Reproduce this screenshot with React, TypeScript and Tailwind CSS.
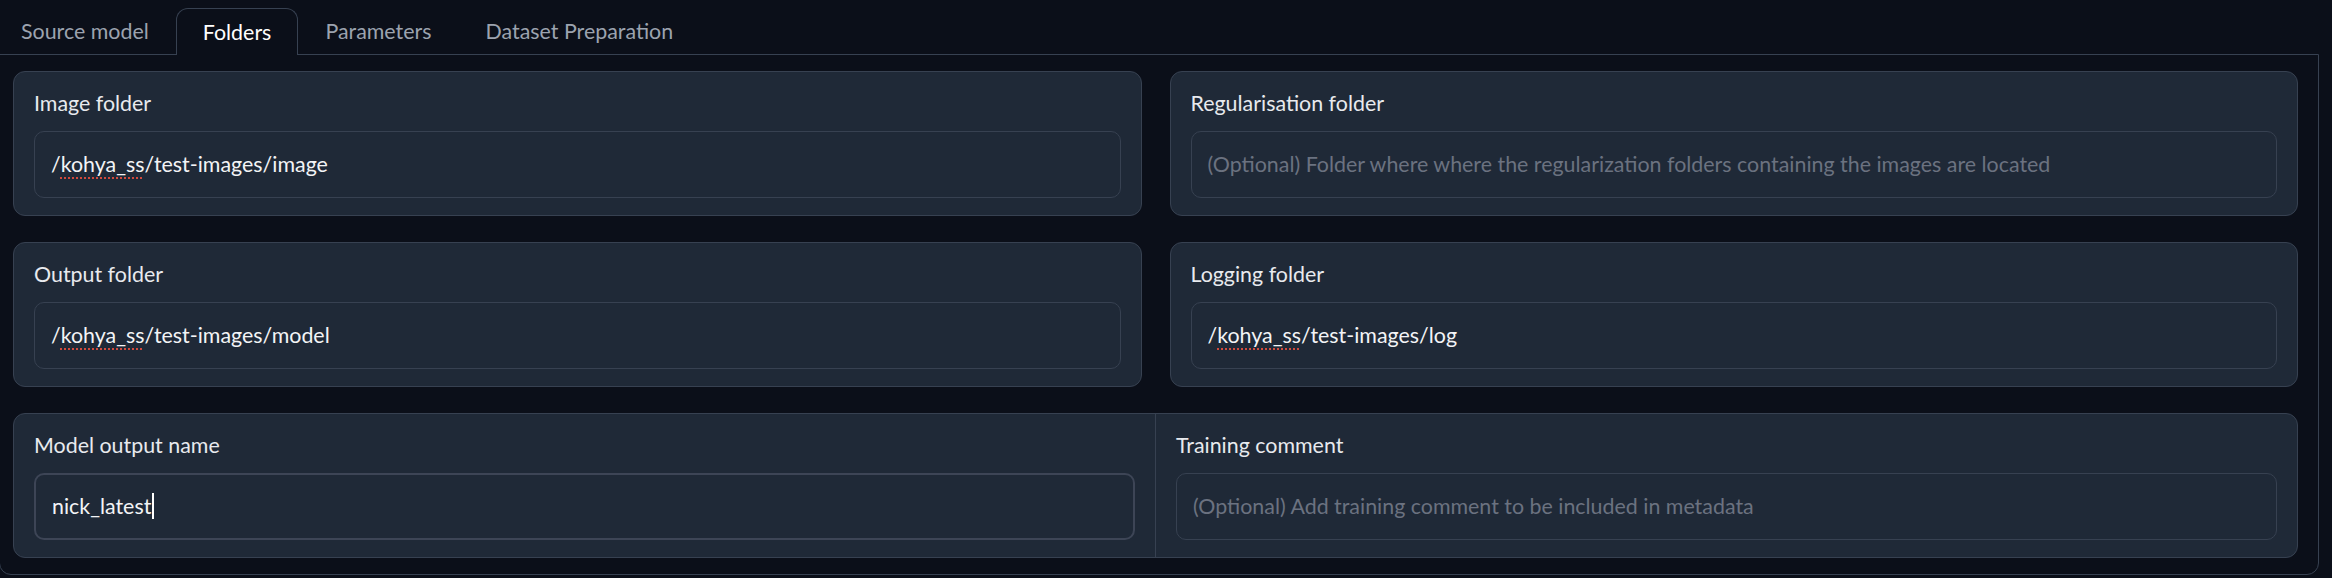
import React from 'react';

const font = { fontFamily: 'Lato, "Noto Sans", sans-serif' };

const tabs = ['Source model', 'Folders', 'Parameters', 'Dataset Preparation'];

function Misspelt({ children }: { children: React.ReactNode }) {
  return (
    <span className="underline decoration-dotted decoration-[#d14a3d] decoration-2 underline-offset-[5px]">
      {children}
    </span>
  );
}

interface FieldProps {
  label: string;
  value?: React.ReactNode;
  placeholder?: string;
  focused?: boolean;
}

function Field({ label, value, placeholder, focused }: FieldProps) {
  return (
    <div className="flex flex-col">
      <span className="h-[30px] leading-[30px] text-[21.4px] text-[#e8eaee]">{label}</span>
      <div
        className={
          'mt-[13px] flex h-[67px] items-center rounded-[10px] bg-[#1f2937] px-[16px] text-[21.4px] ' +
          (focused
            ? 'border-2 border-[#3d4556] px-[15px]'
            : 'border border-[#374151]')
        }
      >
        {value ? (
          <span className="text-[#f3f4f6]">{value}</span>
        ) : (
          <span className="text-[#6b7280]">{placeholder}</span>
        )}
      </div>
    </div>
  );
}

function Card({ children }: { children: React.ReactNode }) {
  return (
    <div className="rounded-[12px] border border-[#374151] bg-[#1f2937] px-[20px] pt-[16px] pb-[17px]">
      {children}
    </div>
  );
}

export default function App() {
  return (
    <div className="h-[578px] w-[2332px] overflow-hidden bg-[#0b0f19]" style={font}>
      {/* Tabs */}
      <div className="-ml-[6px] flex h-[54px] items-end">
        {tabs.map((t) => {
          const active = t === 'Folders';
          return (
            <div
              key={t}
              className={
                'relative z-10 -mb-px flex h-[47px] items-center px-[26px] text-[21.4px] ' +
                (active
                  ? 'rounded-t-[12px] border border-b-0 border-[#374151] bg-[#0b0f19] text-white'
                  : 'border border-transparent text-[#9ca3af]')
              }
            >
              {t}
            </div>
          );
        })}
      </div>

      {/* Panel */}
      <div className="-ml-px w-[2320px] rounded-b-[12px] border border-[#374151] pt-[16px] pr-[20px] pb-[16px] pl-[13px]">
        <div className="grid grid-cols-2 gap-x-[28px] gap-y-[26px]">
          <Card>
            <Field
              label="Image folder"
              value={
                <>
                  /<Misspelt>kohya_ss</Misspelt>/test-images/image
                </>
              }
            />
          </Card>
          <Card>
            <Field
              label="Regularisation folder"
              placeholder="(Optional) Folder where where the regularization folders containing the images are located"
            />
          </Card>
          <Card>
            <Field
              label="Output folder"
              value={
                <>
                  /<Misspelt>kohya_ss</Misspelt>/test-images/model
                </>
              }
            />
          </Card>
          <Card>
            <Field
              label="Logging folder"
              value={
                <>
                  /<Misspelt>kohya_ss</Misspelt>/test-images/log
                </>
              }
            />
          </Card>

          {/* Name + comment row */}
          <div className="col-span-2 flex rounded-[12px] border border-[#374151] bg-[#1f2937]">
            <div className="flex-1 px-[20px] pt-[16px] pb-[17px]">
              <Field
                label="Model output name"
                focused
                value={
                  <span className="inline-flex items-center">
                    nick_latest
                    <span className="ml-px inline-block h-[26px] w-[2px] bg-white" />
                  </span>
                }
              />
            </div>
            <div className="flex-1 border-l border-[#374151] px-[20px] pt-[16px] pb-[17px]">
              <Field
                label="Training comment"
                placeholder="(Optional) Add training comment to be included in metadata"
              />
            </div>
          </div>
        </div>
      </div>
    </div>
  );
}
